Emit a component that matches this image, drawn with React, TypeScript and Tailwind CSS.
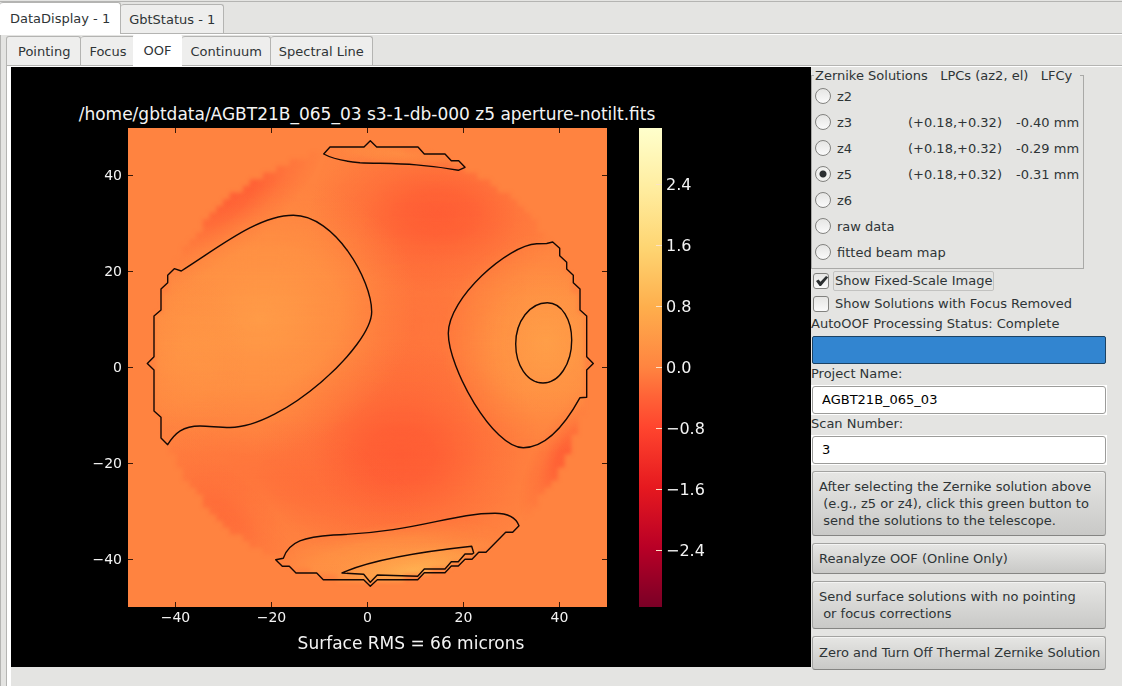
import { useState } from 'react';
import clsx from 'clsx';

const OUTER_TABS = ['DataDisplay - 1', 'GbtStatus - 1'];
const INNER_TABS = ['Pointing', 'Focus', 'OOF', 'Continuum', 'Spectral Line'];

const SOLUTIONS = [
  { name: 'z2' },
  { name: 'z3', lpc: '(+0.18,+0.32)', lfc: '-0.40 mm' },
  { name: 'z4', lpc: '(+0.18,+0.32)', lfc: '-0.29 mm' },
  { name: 'z5', lpc: '(+0.18,+0.32)', lfc: '-0.31 mm' },
  { name: 'z6' },
  { name: 'raw data' },
  { name: 'fitted beam map' },
];

const ACTIONS = [
  'After selecting the Zernike solution above\n (e.g., z5 or z4), click this green button to\n send the solutions to the telescope.',
  'Reanalyze OOF (Online Only)',
  'Send surface solutions with no pointing\n or focus corrections',
  'Zero and Turn Off Thermal Zernike Solution',
];

const CONTOURS = [
  // left lobe
  'M46.3 140.7L53.3 143C90 120 130 87.3 165.3 87.3C207 87.3 243.7 152 243.7 183.7C243.7 218 155 299.5 102 299.5C90 299.5 82 298 72 298C55 298 47 305 39.7 316.7L33 310V289.3L26 283V242L19.3 235.5L26 228.7V188L33 182V161L39.7 154.7V147.3Z',
  // right lobe
  'M424.7 114L418.7 115.5L408.7 115.7C380 117 320.3 170 320.3 205.3C320.3 240 365 319.7 395.3 319.7C418 319.7 437 297 452 269.7L458.7 269.3V242L465.3 235.5L458.7 228.7V188L452 182V161L445.3 154.7V147.3L438.7 141V134.3L431.7 127.7V120.3Z',
  'M419.3 174.7C434 174.7 443.7 192 443.7 212C443.7 236 431 255 415 255C399 255 387.7 237 387.7 216C387.7 193 402 174.7 419.3 174.7Z',
  // top rim
  'M195.7 26L202 19H236L242.3 12.7L248.7 19H290L296.3 26H317L323.3 32.7H330.7L337 39.3L330.3 42.3C290 35 265 36 232 34.7C218 33.5 205 31 195.7 26Z',
  // bottom rim
  'M147.7 431.7L155.3 430.3C161 413 177 409 205.3 407C290 404 322 385.3 367 385.3C381 385.3 388 390 391 397.7L384.7 404.3H377.7L358 424.3H350.7L344 431.3H337L330.3 438H323.3L317 444.7H296.3L289.7 451.7H249.3L242.3 458.3L235.7 451.7H195.3L188.7 445H168L161.3 438.3H154.3Z',
  'M214 445C245 431 300 423 343.7 418.3L345.7 425L344.3 426H337L330.3 433.7H323.3L317 441H296.3L289.7 448.3L249.3 447L242.3 454.3L235.7 446.3Z',
];

// The dish is sampled on a coarse grid, so its rim is a staircase
const CELL = 6.7;
const DISH_ROWS = Array.from({ length: 65 }, (_, i) => {
  const dy = (i - 32) * CELL;
  const half = Math.round(Math.sqrt(Math.max(0, 217 * 217 - dy * dy)) / CELL) * CELL;
  return { y: 235.5 + dy - CELL / 2, x: 242.3 - half, width: half * 2 };
});

const BLOBS = [
  { fill: 'url(#hot)', cx: 285, cy: 200, rx: 120, ry: 250, opacity: 0.35, rotate: 0 },
  { fill: 'url(#hot)', cx: 310, cy: 86, rx: 130, ry: 80, opacity: 0.9, rotate: 0 },
  { fill: 'url(#hot)', cx: 272, cy: 327, rx: 145, ry: 112, opacity: 0.95, rotate: 0 },
  { fill: 'url(#hot)', cx: 140, cy: 350, rx: 160, ry: 65, opacity: 0.35, rotate: 15 },
  { fill: 'url(#hot)', cx: 100, cy: 76, rx: 120, ry: 46, opacity: 1, rotate: -40 },
  { fill: 'url(#hot)', cx: 95, cy: 390, rx: 95, ry: 44, opacity: 0.5, rotate: 44 },
  { fill: 'url(#hot)', cx: 440, cy: 325, rx: 82, ry: 32, opacity: 0.9, rotate: -60 },
  { fill: 'url(#warm)', cx: 132, cy: 190, rx: 160, ry: 135, opacity: 0.9, rotate: -20 },
  { fill: 'url(#warm)', cx: 50, cy: 230, rx: 70, ry: 90, opacity: 0.4, rotate: 0 },
  { fill: 'url(#warm)', cx: 418, cy: 215, rx: 105, ry: 110, opacity: 1, rotate: 0 },
  { fill: 'url(#warm)', cx: 418, cy: 215, rx: 60, ry: 70, opacity: 0.7, rotate: 0 },
  { fill: 'url(#warm)', cx: 250, cy: 430, rx: 130, ry: 34, opacity: 0.8, rotate: -9 },
  { fill: 'url(#bright)', cx: 285, cy: 442, rx: 110, ry: 28, opacity: 0.9, rotate: -10 },
  { fill: 'url(#warm)', cx: 270, cy: 26, rx: 75, ry: 14, opacity: 0.5, rotate: 4 },
];

const AXIS_TICKS = [-40, -20, 0, 20, 40];
const BAR_TICKS = [2.4, 1.6, 0.8, 0, -0.8, -1.6, -2.4];

const signed = (text: string) => text.replace('-', '\u2212');

function AperturePlot() {
  return (
    <svg
      viewBox="0 0 800 600"
      className="block h-auto w-full bg-black"
      fill="#f4f4f4"
      role="img"
      aria-label="Aperture map"
    >
      <defs>
        <radialGradient id="hot">
          <stop offset="0" stopColor="#ff5a33" />
          <stop offset="0.25" stopColor="#ff5a33" stopOpacity="0.87" />
          <stop offset="0.6" stopColor="#ff5a33" stopOpacity="0.36" />
          <stop offset="1" stopColor="#ff5a33" stopOpacity="0" />
        </radialGradient>
        <radialGradient id="warm">
          <stop offset="0" stopColor="#ff9e48" />
          <stop offset="0.5" stopColor="#ff9845" stopOpacity="0.7" />
          <stop offset="1" stopColor="#ff8a41" stopOpacity="0" />
        </radialGradient>
        <radialGradient id="bright">
          <stop offset="0" stopColor="#ffb352" />
          <stop offset="0.5" stopColor="#ffa54b" stopOpacity="0.7" />
          <stop offset="1" stopColor="#ff8a41" stopOpacity="0" />
        </radialGradient>
        <linearGradient id="colorbar" x1="0" y1="0" x2="0" y2="1">
          <stop offset="0" stopColor="#ffffcc" />
          <stop offset="0.125" stopColor="#ffeda0" />
          <stop offset="0.25" stopColor="#fed572" />
          <stop offset="0.375" stopColor="#feae4c" />
          <stop offset="0.5" stopColor="#ff8440" />
          <stop offset="0.56" stopColor="#ff6337" />
          <stop offset="0.625" stopColor="#ff452e" />
          <stop offset="0.75" stopColor="#e6191f" />
          <stop offset="0.875" stopColor="#b90026" />
          <stop offset="1" stopColor="#7a0026" />
        </linearGradient>
        <filter id="soften">
          <feGaussianBlur stdDeviation="2" />
        </filter>
        <mask id="dish" maskUnits="userSpaceOnUse" x="0" y="0" width="479" height="479">
          <g fill="#fff" filter="url(#soften)">
            {DISH_ROWS.map((row) => (
              <rect key={row.y} x={row.x} y={row.y} width={row.width} height={CELL + 0.2} />
            ))}
          </g>
        </mask>
      </defs>

      <text x="356" y="53" textAnchor="middle" fontSize="17">
        /home/gbtdata/AGBT21B_065_03 s3-1-db-000 z5 aperture-notilt.fits
      </text>

      <g transform="translate(117 61)">
        <rect width="479" height="479" fill="#ff8340" />
        <g mask="url(#dish)">
          {BLOBS.map((b, i) => (
            <ellipse
              key={i}
              cx={b.cx}
              cy={b.cy}
              rx={b.rx}
              ry={b.ry}
              opacity={b.opacity}
              fill={b.fill}
              transform={`rotate(${b.rotate} ${b.cx} ${b.cy})`}
            />
          ))}
        </g>
        <g fill="none" stroke="#150804" strokeWidth="1.4" strokeLinejoin="round">
          {CONTOURS.map((d) => (
            <path key={d} d={d} />
          ))}
        </g>
        {AXIS_TICKS.map((t) => {
          const x = 239.5 + t * 4.8;
          const y = 239.5 - t * 4.8;
          return (
            <g key={t}>
              <path d={`M${x} 0v5M${x} 479v-5M0 ${y}h5M479 ${y}h-5`} stroke="#3a1808" />
              <text x={x} y="494" textAnchor="middle" fontSize="14">
                {signed(String(t))}
              </text>
              <text x="-6" y={Math.floor(y) + 5} textAnchor="end" fontSize="14">
                {signed(String(t))}
              </text>
            </g>
          );
        })}
      </g>

      <text x="400" y="582" textAnchor="middle" fontSize="17">
        Surface RMS = 66 microns
      </text>

      {/* Colour scale */}
      <rect x="628" y="61" width="23" height="479" fill="url(#colorbar)" />
      {BAR_TICKS.map((t) => {
        const y = 300.5 - (t / 0.8) * 61;
        return (
          <g key={t}>
            <path d={`M645 ${y}h6`} stroke="#fbe3c8" />
            <text x="655" y={Math.round(y) + 5} fontSize="16">
              {signed(t.toFixed(1))}
            </text>
          </g>
        );
      })}
    </svg>
  );
}

function SolutionPicker() {
  const [selected, setSelected] = useState('z5');
  return (
    <fieldset className="w-[273px] border border-[#a9a9a7] pb-[3px]">
      <legend className="ml-[2px] -mb-px whitespace-pre pl-px pr-2 leading-[17px]">
        {'Zernike Solutions   LPCs (az2, el)   LFCy'}
      </legend>
      {SOLUTIONS.map(({ name, lpc, lfc }) => (
        <label key={name} className="grid h-[26px] grid-cols-[96px_108px_auto] items-center">
          <span className="flex items-center gap-[6px] whitespace-nowrap pl-[3px]">
            <input
              type="radio"
              name="solution"
              checked={selected === name}
              onChange={() => setSelected(name)}
              className="size-4 shrink-0 appearance-none rounded-full border border-[#82827f] bg-linear-to-b from-[#e6e6e4] to-[#fafafa] checked:bg-[radial-gradient(circle,#2b2f30_2px,#2b2f30_3px,#f0f0ee_4px)]"
            />
            {name}
          </span>
          <span>{lpc}</span>
          <span>{lfc}</span>
        </label>
      ))}
    </fieldset>
  );
}

function CheckRow({ label, defaultChecked, focused }: { label: string; defaultChecked?: boolean; focused?: boolean }) {
  return (
    <label className="flex h-[23px] items-center gap-1 pl-[2px]">
      <span className="relative flex">
        <input
          type="checkbox"
          defaultChecked={defaultChecked}
          className="peer size-4 appearance-none rounded-[3px] border border-[#82827f] bg-linear-to-b from-[#e6e6e4] to-[#fafafa]"
        />
        <svg
          viewBox="0 0 16 16"
          className="pointer-events-none absolute inset-0 hidden size-4 peer-checked:block"
          aria-hidden="true"
        >
          <path d="M3 8L5.5 6.5L7.5 8.8L13 3L15.2 4.2L8 13H6.6Z" fill="#2b2f30" />
        </svg>
      </span>
      <span className={clsx('rounded-[2px] border px-px leading-[18px]', focused ? 'border-[#c2c2c0]' : 'border-transparent')}>
        {label}
      </span>
    </label>
  );
}

function Field({ id, label, value }: { id: string; label: string; value: string }) {
  return (
    <div>
      <label htmlFor={id} className="mb-[2px] block leading-[18px]">
        {label}
      </label>
      <div className="bg-white p-px">
        <input
          id={id}
          defaultValue={value}
          className="block h-7 w-full rounded-[3px] border border-[#9c9c9a] bg-white px-[9px] pb-[2px] text-black outline-none"
        />
      </div>
    </div>
  );
}

export default function App() {
  const [outer, setOuter] = useState(0);
  const [inner, setInner] = useState(2);

  return (
    <div className="flex min-h-screen flex-col bg-[#e4e4e2] pt-px font-['DejaVu_Sans',sans-serif] text-[13px] leading-[17px] text-[#2e3436]">
      <nav className="flex h-[33px] items-end border-y border-[#b4b4b2]">
        {OUTER_TABS.map((tab, i) => (
          <button
            key={tab}
            type="button"
            onClick={() => setOuter(i)}
            className={clsx(
              'rounded-t-[3px] border-t border-r border-[#b4b4b2]',
              outer === i ? '-mb-px h-8 bg-white px-[10px]' : 'h-[29px] bg-[#eeeeed] px-2',
            )}
          >
            {tab}
          </button>
        ))}
      </nav>

      <div className="flex flex-1 flex-col border-t border-t-white">
        <div className="flex flex-1 flex-col border-l border-[#b4b4b2] pl-[5px]">
          <nav className="flex h-[31px] items-end border-b border-[#b4b4b2]">
            {INNER_TABS.map((tab, i) => (
              <button
                key={tab}
                type="button"
                onClick={() => setInner(i)}
                className={clsx(
                  'rounded-t-[3px] first:border-l first:pl-[11px] first:pr-[10px]',
                  inner === i
                    ? 'z-10 -mb-px -ml-[3px] h-8 bg-white px-[11px]'
                    : 'h-[29px] border-t border-r border-[#b4b4b2] bg-[#eeeeed] px-2',
                )}
              >
                {tab}
              </button>
            ))}
          </nav>

          <div className="flex flex-1 items-stretch border-l border-[#b4b4b2]">
            <div className="w-1 shrink-0 bg-white" />
            <main className="flex flex-1 items-start border-t border-white">
              <div className="min-w-0 flex-1">
                <AperturePlot />
              </div>

              <aside className="w-[311px] shrink-0 pr-[15px]">
                <SolutionPicker />
                <CheckRow label="Show Fixed-Scale Image" defaultChecked focused />
                <CheckRow label="Show Solutions with Focus Removed" />
                <p id="status" className="mb-[3px] leading-[18px]">
                  AutoOOF Processing Status: Complete
                </p>
                <div
                  role="progressbar"
                  aria-labelledby="status"
                  aria-valuenow={100}
                  className="mx-px mb-px h-7 rounded-[2px] border border-[#1c4263] bg-[#3285d0]"
                />
                <Field id="project" label="Project Name:" value="AGBT21B_065_03" />
                <Field id="scan" label="Scan Number:" value="3" />
                <div className="mt-[6px] flex flex-col gap-[7px] px-px">
                  {ACTIONS.map((text) => (
                    <button
                      key={text}
                      type="button"
                      className="whitespace-pre rounded-[3px] border border-[#a3a3a1] border-b-[#858583] bg-linear-to-b from-[#e6e6e4] to-[#c9c9c7] px-[6px] py-[6px] text-left shadow-[inset_0_1px_0_#f4f4f3] last:pb-2 last:pt-[7px]"
                    >
                      {text}
                    </button>
                  ))}
                </div>
              </aside>
            </main>
          </div>
        </div>
      </div>
    </div>
  );
}
